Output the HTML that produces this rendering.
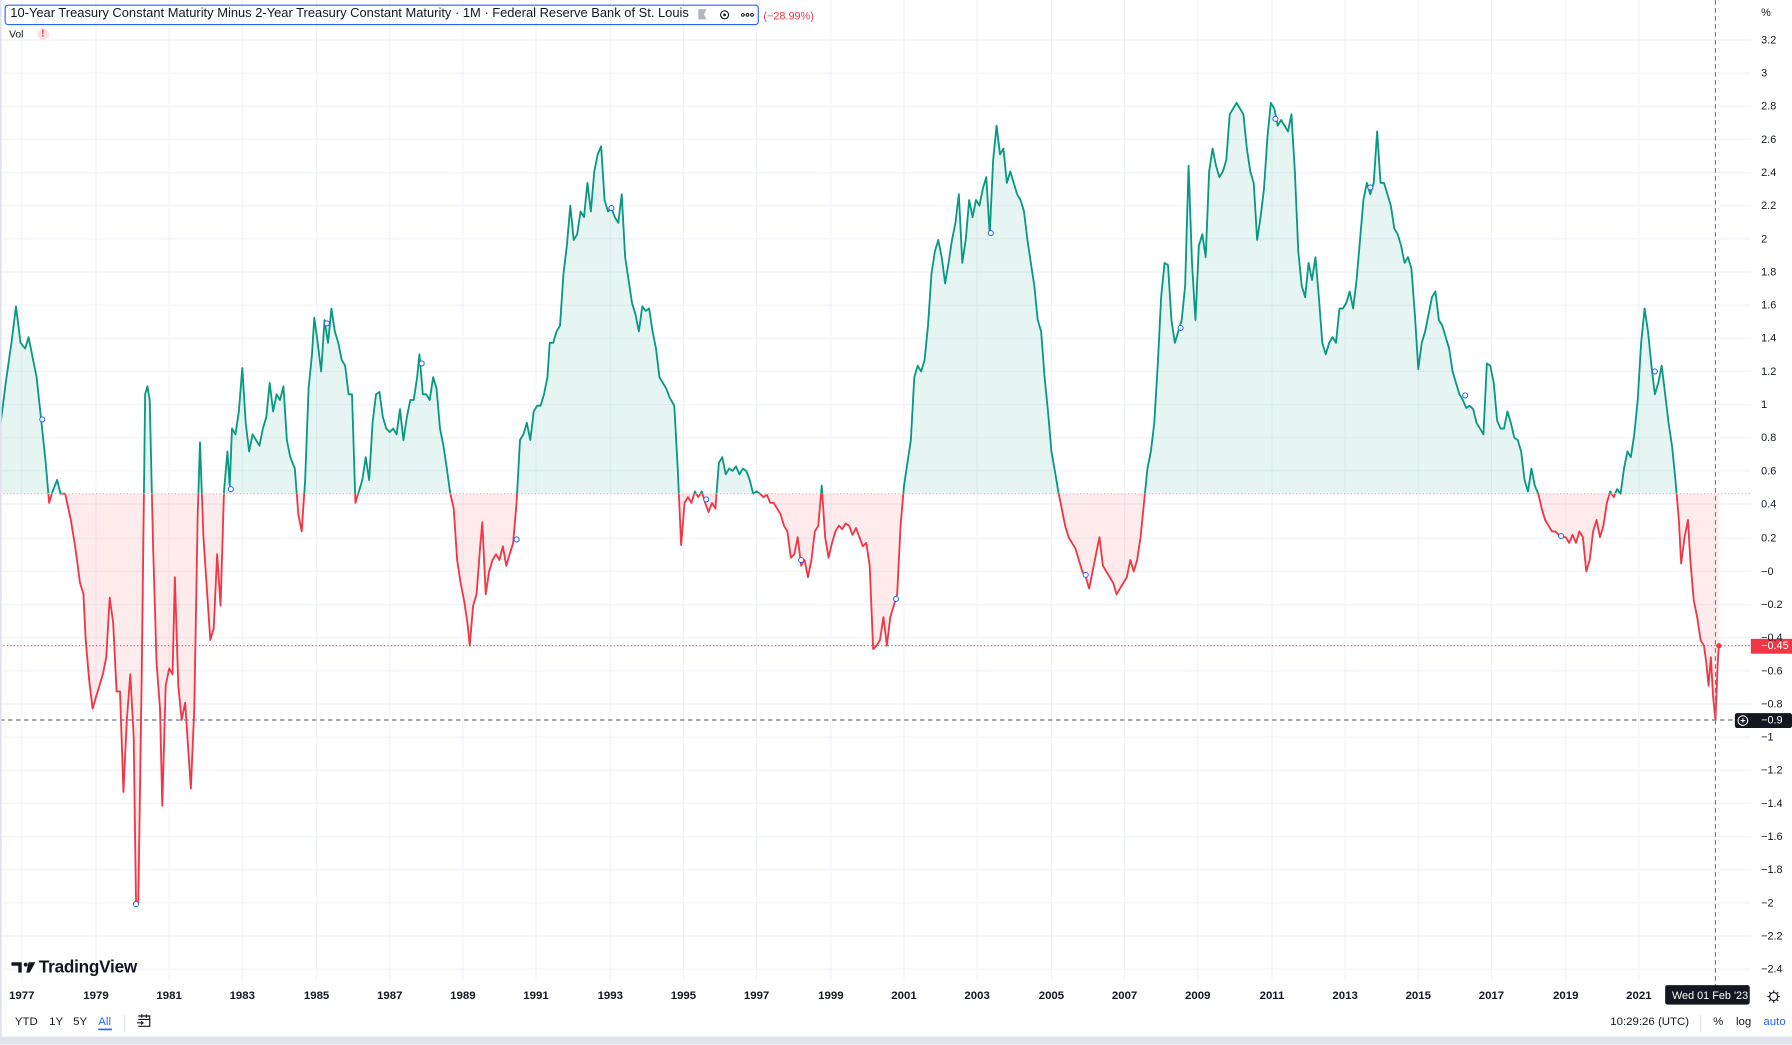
<!DOCTYPE html>
<html><head><meta charset="utf-8"><style>
html,body{margin:0;padding:0;background:#fff;overflow:hidden}
#w{position:absolute;left:0;top:0;width:1568px;height:913.5px;transform:scale(1.142857);transform-origin:0 0;font-family:"Liberation Sans",sans-serif;color:#131722}
.yl{position:absolute;left:1541px;font-size:9.5px;color:#131722}
.xl{position:absolute;top:866px;font-size:10px;font-weight:bold;width:40px;margin-left:-20px;text-align:center}
</style></head><body><div id="w">
<svg width="1568" height="914" style="position:absolute;left:0;top:0">
<defs>
<clipPath id="ca"><rect x="0" y="0" width="1532" height="432"/></clipPath>
<clipPath id="cb"><rect x="0" y="432" width="1532" height="430"/></clipPath>
</defs>
<g stroke="#f0f3fa" stroke-width="1">
<line x1="19" y1="0" x2="19" y2="858"/><line x1="84" y1="0" x2="84" y2="858"/><line x1="148" y1="0" x2="148" y2="858"/><line x1="212" y1="0" x2="212" y2="858"/><line x1="277" y1="0" x2="277" y2="858"/><line x1="341" y1="0" x2="341" y2="858"/><line x1="405" y1="0" x2="405" y2="858"/><line x1="469" y1="0" x2="469" y2="858"/><line x1="534" y1="0" x2="534" y2="858"/><line x1="598" y1="0" x2="598" y2="858"/><line x1="662" y1="0" x2="662" y2="858"/><line x1="727" y1="0" x2="727" y2="858"/><line x1="791" y1="0" x2="791" y2="858"/><line x1="855" y1="0" x2="855" y2="858"/><line x1="920" y1="0" x2="920" y2="858"/><line x1="984" y1="0" x2="984" y2="858"/><line x1="1048" y1="0" x2="1048" y2="858"/><line x1="1113" y1="0" x2="1113" y2="858"/><line x1="1177" y1="0" x2="1177" y2="858"/><line x1="1241" y1="0" x2="1241" y2="858"/><line x1="1305" y1="0" x2="1305" y2="858"/><line x1="1370" y1="0" x2="1370" y2="858"/><line x1="1434" y1="0" x2="1434" y2="858"/>
<line x1="0" y1="35" x2="1532" y2="35"/><line x1="0" y1="64" x2="1532" y2="64"/><line x1="0" y1="93" x2="1532" y2="93"/><line x1="0" y1="122" x2="1532" y2="122"/><line x1="0" y1="151" x2="1532" y2="151"/><line x1="0" y1="180" x2="1532" y2="180"/><line x1="0" y1="209" x2="1532" y2="209"/><line x1="0" y1="238" x2="1532" y2="238"/><line x1="0" y1="267" x2="1532" y2="267"/><line x1="0" y1="296" x2="1532" y2="296"/><line x1="0" y1="325" x2="1532" y2="325"/><line x1="0" y1="354" x2="1532" y2="354"/><line x1="0" y1="383" x2="1532" y2="383"/><line x1="0" y1="412" x2="1532" y2="412"/><line x1="0" y1="441" x2="1532" y2="441"/><line x1="0" y1="471" x2="1532" y2="471"/><line x1="0" y1="500" x2="1532" y2="500"/><line x1="0" y1="529" x2="1532" y2="529"/><line x1="0" y1="558" x2="1532" y2="558"/><line x1="0" y1="587" x2="1532" y2="587"/><line x1="0" y1="616" x2="1532" y2="616"/><line x1="0" y1="645" x2="1532" y2="645"/><line x1="0" y1="674" x2="1532" y2="674"/><line x1="0" y1="703" x2="1532" y2="703"/><line x1="0" y1="732" x2="1532" y2="732"/><line x1="0" y1="761" x2="1532" y2="761"/><line x1="0" y1="790" x2="1532" y2="790"/><line x1="0" y1="819" x2="1532" y2="819"/><line x1="0" y1="848" x2="1532" y2="848"/>
</g>
<g id="data">
<polygon id="pf" fill="rgba(8,153,129,0.10)" clip-path="url(#ca)" points="0,375 5,335 10,300 14,268 18,300 22,305 25,295 28,310 32,330 36,367 40,405 43,440 46,430 50,420 53,432 57,432 62,455 66,480 70,510 73,520 75,560 78,595 81,620 84,610 87,600 90,590 93,575 96,523 99,545 102,605 105,605 108,693 111,630 114,590 117,645 119,790 121,790 124,590 127,345 129,338 131,350 134,480 137,580 140,620 142,705 145,600 148,585 151,590 153,505 156,600 159,630 162,615 165,660 167,690 170,620 173,450 175,387 178,470 181,515 184,560 187,550 190,485 193,530 196,430 199,395 201,425 203,375 206,380 209,360 212,322 215,370 218,395 221,380 224,385 227,390 230,375 233,365 236,335 239,360 242,345 245,350 248,338 251,385 254,400 258,410 261,450 264,465 267,420 270,340 273,310 275,278 278,300 281,325 284,280 287,300 290,270 293,290 296,300 299,315 302,320 305,345 308,345 311,440 314,430 317,420 320,400 323,420 326,370 329,345 332,343 335,365 338,375 341,378 344,375 347,380 350,358 353,385 356,365 359,350 362,350 365,330 367,310 370,345 373,345 376,350 379,330 382,340 385,375 388,390 391,410 394,432 397,445 400,490 403,510 406,525 409,545 411,565 414,530 417,520 420,480 422,457 425,520 428,500 431,490 434,485 437,490 440,478 443,495 446,485 449,475 452,440 455,385 458,380 461,370 464,385 467,360 470,355 473,355 476,345 479,330 481,300 484,300 487,290 490,285 493,240 496,215 499,180 502,210 505,205 508,185 511,190 514,160 517,185 520,150 523,135 526,128 529,175 532,185 535,182 538,190 541,195 544,170 547,225 550,245 553,265 556,275 559,290 562,268 565,272 568,270 571,290 574,305 577,330 580,335 583,340 586,348 590,355 593,410 596,477 599,440 602,435 605,440 608,430 611,435 614,430 617,440 620,448 623,440 626,445 629,405 632,400 635,415 638,410 641,412 644,408 647,415 650,410 653,412 656,420 659,432 662,430 665,432 668,435 671,433 674,440 677,440 680,445 683,450 686,460 689,465 692,488 695,485 698,470 701,495 704,490 707,505 710,490 713,465 716,460 719,425 722,470 725,488 728,475 731,465 734,460 737,463 740,458 743,460 746,468 749,462 752,470 755,478 758,475 761,495 764,568 767,565 770,560 773,540 776,565 779,540 782,530 785,520 788,460 791,425 794,405 797,385 800,330 803,320 806,325 809,315 812,285 815,240 818,220 821,210 824,225 827,248 830,230 833,210 836,195 839,170 842,230 845,210 848,175 851,190 854,175 857,180 860,165 863,155 866,205 869,140 872,110 875,135 878,130 881,160 884,150 887,160 890,170 893,175 896,185 899,210 902,230 905,250 908,280 911,290 914,330 917,360 920,395 923,412 926,430 929,445 932,460 935,470 938,475 941,480 944,490 947,500 950,505 953,515 956,500 959,485 962,470 965,495 968,500 971,505 974,510 977,520 980,515 983,510 986,505 989,490 992,500 995,490 998,470 1001,440 1004,410 1007,395 1010,370 1013,320 1016,260 1019,230 1022,232 1025,280 1028,300 1031,290 1034,280 1037,250 1040,145 1043,230 1046,280 1049,215 1052,205 1055,225 1058,150 1061,130 1064,145 1067,155 1070,150 1073,140 1076,100 1079,95 1082,90 1085,95 1088,100 1091,130 1094,150 1097,160 1100,210 1103,190 1106,165 1109,120 1112,90 1115,95 1118,110 1121,105 1124,110 1127,115 1130,100 1133,150 1136,220 1139,250 1142,260 1145,230 1148,245 1151,225 1154,260 1157,300 1160,310 1163,300 1166,295 1169,300 1172,270 1175,270 1178,265 1181,255 1184,270 1187,245 1190,210 1193,175 1196,160 1199,170 1202,160 1205,115 1208,160 1211,160 1214,170 1217,180 1220,200 1223,205 1226,215 1229,230 1232,225 1235,235 1238,275 1241,323 1244,300 1247,290 1250,275 1253,260 1256,255 1259,280 1262,285 1265,295 1268,305 1271,325 1274,335 1277,345 1280,350 1283,357 1286,355 1289,358 1292,370 1295,375 1298,380 1301,318 1304,320 1307,335 1310,368 1313,375 1316,375 1319,360 1322,370 1325,383 1328,385 1331,395 1334,420 1337,430 1340,410 1343,425 1346,432 1349,445 1352,455 1355,460 1358,465 1361,465 1364,468 1367,470 1370,470 1373,475 1376,468 1379,475 1382,465 1385,470 1388,500 1391,490 1394,465 1397,455 1400,470 1403,460 1406,440 1409,430 1412,435 1415,428 1418,432 1421,410 1424,395 1427,400 1430,380 1433,350 1436,300 1439,270 1442,290 1445,320 1448,345 1451,335 1454,320 1457,345 1460,370 1463,390 1466,420 1469,455 1471,493 1474,470 1477,455 1479,490 1482,525 1485,540 1488,560 1491,565 1493,580 1495,600 1497,575 1499,610 1501,630 1503,580 1504,565 1504,432 0,432"/>
</g>
<script>
(function(){var pf=document.getElementById('pf');var pts=pf.getAttribute('points').trim().split(/\s+/);var line=pts.slice(0,pts.length-2).join(' ');var g=document.getElementById('data');var ns='http://www.w3.org/2000/svg';
var f2=pf.cloneNode();f2.setAttribute('fill','rgba(242,54,69,0.10)');f2.setAttribute('clip-path','url(#cb)');g.appendChild(f2);
[['#089981','url(#ca)'],['#f23645','url(#cb)']].forEach(function(c){var p=document.createElementNS(ns,'polyline');p.setAttribute('points',line);p.setAttribute('fill','none');p.setAttribute('stroke',c[0]);p.setAttribute('stroke-width','1.6');p.setAttribute('stroke-linejoin','round');p.setAttribute('clip-path',c[1]);g.appendChild(p);});})();
</script>
<line x1="0" y1="432" x2="1532" y2="432" stroke="#f7a9b0" stroke-width="1" stroke-dasharray="1,2"/>
<line x1="0" y1="565" x2="1532" y2="565" stroke="#f23645" stroke-width="1" stroke-dasharray="1,2"/>
<line x1="0" y1="630" x2="1532" y2="630" stroke="#787b86" stroke-width="1" stroke-dasharray="4,3"/>
<line x1="1501" y1="0" x2="1501" y2="862" stroke="#787b86" stroke-width="1" stroke-dasharray="4,3"/>
<g fill="#fff" stroke="#2962ff" stroke-width="0.9">
<circle cx="37" cy="367" r="2.2"/><circle cx="119" cy="791" r="2.2"/><circle cx="202" cy="428" r="2.2"/><circle cx="286" cy="283" r="2.2"/><circle cx="369" cy="318" r="2.2"/><circle cx="452" cy="472" r="2.2"/><circle cx="535" cy="182" r="2.2"/><circle cx="618" cy="437" r="2.2"/><circle cx="701" cy="490" r="2.2"/><circle cx="784" cy="524" r="2.2"/><circle cx="867" cy="204" r="2.2"/><circle cx="950" cy="503" r="2.2"/><circle cx="1033" cy="287" r="2.2"/><circle cx="1116" cy="104" r="2.2"/><circle cx="1199" cy="164" r="2.2"/><circle cx="1282" cy="346" r="2.2"/><circle cx="1366" cy="469" r="2.2"/><circle cx="1448" cy="325" r="2.2"/>
</g>
<circle cx="1504" cy="565" r="2.3" fill="#f23645"/>
<rect x="0" y="0" width="1.5" height="914" fill="#e0e3eb"/>
<rect x="0" y="907" width="1568" height="7" fill="#e0e3eb"/>
<rect x="1532" y="559" width="36" height="13" fill="#f23645"/>
<rect x="1518" y="624" width="50" height="13" rx="2" fill="#131722"/>
<circle cx="1525" cy="630.5" r="4.2" fill="none" stroke="#fff" stroke-width="0.9"/>
<path d="M1523 630.5h4M1525 628.5v4" stroke="#fff" stroke-width="0.9"/>
<rect x="1457" y="862" width="74" height="17" rx="2" fill="#131722"/>
<line x1="1488" y1="888" x2="1488" y2="903" stroke="#e0e3eb"/>
<line x1="109" y1="888" x2="109" y2="903" stroke="#e0e3eb"/>
<circle cx="1552" cy="872" r="3.5" fill="none" stroke="#131722" stroke-width="1"/>
<g stroke="#131722" stroke-width="1"><path d="M1552 866.5v2M1552 875.5v2M1546.5 872h2M1555.5 872h2M1548 868l1.4 1.4M1554.6 874.6l1.4 1.4M1548 876l1.4-1.4M1554.6 869.4l1.4-1.4"/></g>
<g fill="none" stroke="#131722" stroke-width="1"><path d="M121 889h10v9h-10M121 892h10M124 887.5v3M128 887.5v3M120 895h5l-1.5-1.5M125 895l-1.5 1.5"/></g>
<g fill="#131722"><path d="M10 842h9v9h-3v-6h-6z"/><circle cx="22.5" cy="844" r="1.7"/><path d="M25 842h6l-5 9h-3z"/></g>
<rect x="86" y="900" width="12" height="1.5" fill="#2962ff"/>
<path d="M611 8h7l-2 4.5 2 4.5h-7z" fill="#b2b5be"/>
<circle cx="634" cy="13" r="3.5" fill="none" stroke="#131722" stroke-width="1"/><circle cx="634" cy="13" r="1.2" fill="#131722"/>
<g fill="none" stroke="#131722" stroke-width="0.9"><circle cx="650" cy="13" r="1.2"/><circle cx="654" cy="13" r="1.2"/><circle cx="658" cy="13" r="1.2"/></g>
<circle cx="38" cy="30" r="5" fill="#fde0e3"/>
</svg>
<div style="position:absolute;left:4px;top:4px;width:658px;height:16px;border:1.5px solid #2962ff;border-radius:3px"></div>
<div style="position:absolute;left:9px;top:6px;font-size:11.3px;white-space:nowrap">10-Year Treasury Constant Maturity Minus 2-Year Treasury Constant Maturity · 1M · Federal Reserve Bank of St. Louis</div>
<div style="position:absolute;left:668px;top:9px;font-size:9.5px;color:#f23645">(−28.99%)</div>
<div style="position:absolute;left:8px;top:25px;font-size:9px">Vol</div>
<div style="position:absolute;left:36px;top:24px;font-size:9px;color:#f23645;font-weight:bold">!</div>
<div style="position:absolute;left:34px;top:838px;font-size:15px;font-weight:bold;letter-spacing:-0.2px">TradingView</div>
<div class="yl" style="top:6px">%</div>
<div class="yl" style="top:30px">3.2</div><div class="yl" style="top:59px">3</div><div class="yl" style="top:88px">2.8</div><div class="yl" style="top:117px">2.6</div><div class="yl" style="top:146px">2.4</div><div class="yl" style="top:175px">2.2</div><div class="yl" style="top:204px">2</div><div class="yl" style="top:233px">1.8</div><div class="yl" style="top:262px">1.6</div><div class="yl" style="top:291px">1.4</div><div class="yl" style="top:320px">1.2</div><div class="yl" style="top:349px">1</div><div class="yl" style="top:378px">0.8</div><div class="yl" style="top:407px">0.6</div><div class="yl" style="top:436px">0.4</div><div class="yl" style="top:466px">0.2</div><div class="yl" style="top:495px">−0</div><div class="yl" style="top:524px">−0.2</div><div class="yl" style="top:553px">−0.4</div><div class="yl" style="top:582px">−0.6</div><div class="yl" style="top:611px">−0.8</div><div class="yl" style="top:640px">−1</div><div class="yl" style="top:669px">−1.2</div><div class="yl" style="top:698px">−1.4</div><div class="yl" style="top:727px">−1.6</div><div class="yl" style="top:756px">−1.8</div><div class="yl" style="top:785px">−2</div><div class="yl" style="top:814px">−2.2</div><div class="yl" style="top:843px">−2.4</div>
<div class="yl" style="top:560px;color:#fff">−0.45</div>
<div class="yl" style="top:625px;color:#fff">−0.9</div>
<div class="xl" style="left:19px">1977</div><div class="xl" style="left:84px">1979</div><div class="xl" style="left:148px">1981</div><div class="xl" style="left:212px">1983</div><div class="xl" style="left:277px">1985</div><div class="xl" style="left:341px">1987</div><div class="xl" style="left:405px">1989</div><div class="xl" style="left:469px">1991</div><div class="xl" style="left:534px">1993</div><div class="xl" style="left:598px">1995</div><div class="xl" style="left:662px">1997</div><div class="xl" style="left:727px">1999</div><div class="xl" style="left:791px">2001</div><div class="xl" style="left:855px">2003</div><div class="xl" style="left:920px">2005</div><div class="xl" style="left:984px">2007</div><div class="xl" style="left:1048px">2009</div><div class="xl" style="left:1113px">2011</div><div class="xl" style="left:1177px">2013</div><div class="xl" style="left:1241px">2015</div><div class="xl" style="left:1305px">2017</div><div class="xl" style="left:1370px">2019</div><div class="xl" style="left:1434px">2021</div>
<div style="position:absolute;left:1463px;top:866px;font-size:9.5px;color:#fff">Wed 01 Feb '23</div>
<div style="position:absolute;left:13px;top:889px;font-size:10px">YTD</div>
<div style="position:absolute;left:43px;top:889px;font-size:10px">1Y</div>
<div style="position:absolute;left:64px;top:889px;font-size:10px">5Y</div>
<div style="position:absolute;left:86px;top:889px;font-size:10px;color:#2962ff">All</div>
<div style="position:absolute;left:1409px;top:889px;font-size:10px">10:29:26 (UTC)</div>
<div style="position:absolute;left:1499px;top:889px;font-size:10px">%</div>
<div style="position:absolute;left:1519px;top:889px;font-size:10px">log</div>
<div style="position:absolute;left:1543px;top:889px;font-size:10px;color:#2962ff">auto</div>
</div></body></html>
